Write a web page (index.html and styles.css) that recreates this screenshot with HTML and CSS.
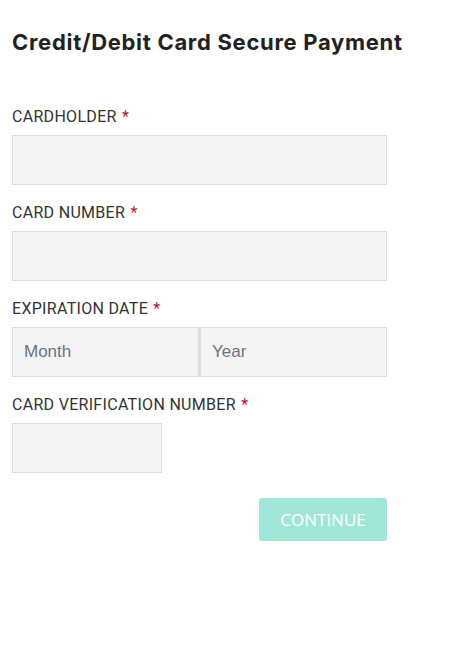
FILE: index.html
```html
<!DOCTYPE html>
<html>
<head>
<meta charset="utf-8">
<link rel="stylesheet" href="styles.css">
</head>
<body>
<div class="page">
  <h1 class="title">Credit/Debit Card Secure Payment</h1>
  <form class="form">
    <div class="field">
      <label class="label">CARDHOLDER <span class="req">*</span></label>
      <input class="input" type="text">
    </div>
    <div class="field">
      <label class="label">CARD NUMBER <span class="req">*</span></label>
      <input class="input" type="text">
    </div>
    <div class="field">
      <label class="label">EXPIRATION DATE <span class="req">*</span></label>
      <div class="split">
        <input class="input" type="text" placeholder="Month">
        <input class="input" type="text" placeholder="Year">
      </div>
    </div>
    <div class="field">
      <label class="label">CARD VERIFICATION NUMBER <span class="req">*</span></label>
      <input class="input cvv" type="text">
    </div>
    <div class="actions">
      <button class="btn" type="button">CONTINUE</button>
    </div>
  </form>
</div>
</body>
</html>
```
FILE: styles.css
```css
* { box-sizing: border-box; }
body { margin: 0; background: #fff; }
.page { padding: 12px; width: 420px; }
.title {
  font-family: Inter, "Noto Sans", sans-serif;
  font-weight: 700;
  font-size: 22px;
  line-height: 28px;
  color: #222;
  margin: 16px 0 0;
  letter-spacing: 0.7px;
}
.form { margin-top: 49px; display: flex; flex-direction: column; }
.field { display: flex; flex-direction: column; gap: 6px; margin-bottom: 16px; }
.label {
  font-family: Roboto, "Noto Sans", sans-serif;
  font-size: 16px;
  line-height: 24px;
  letter-spacing: 0.3px;
  color: #333;
  height: 24px;
}
.req { color: #c8102e; margin-left: 1px; }
.input {
  height: 50px;
  width: 375px;
  background: #f4f4f4;
  border: 1px solid #dcdcdc;
  margin: 0;
  padding: 0 11px;
  font-family: "Liberation Sans", Arial, sans-serif;
  font-size: 17px;
  color: #333;
  outline: none;
}
.input::placeholder { color: #6b7284; }
.split { display: flex; }
.split .input { width: 187px; }
.split .input + .input { width: 188px; border-left: 2px solid #dcdcdc; }
.cvv { width: 150px; }
.actions { display: flex; justify-content: flex-end; margin-top: 9px; width: 375px; }
.btn {
  width: 128px;
  height: 43px;
  background: #9fe6d9;
  border: none;
  border-radius: 3px;
  color: #fff;
  font-family: "Open Sans", sans-serif;
  font-size: 17px;
  padding: 0;
}
```
